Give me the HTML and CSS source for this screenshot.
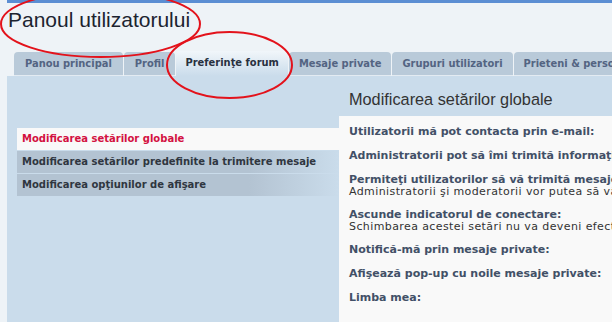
FILE: index.html
```html
<!DOCTYPE html>
<html lang="ro">
<head>
<meta charset="utf-8">
<title>Panoul utilizatorului</title>
<link rel="stylesheet" href="styles.css">
</head>
<body>
<div class="page">
  <div class="topbar"></div>
  <h1 class="title">Panoul utilizatorului</h1>
  <ul class="tabs">
    <li class="tab">Panou principal</li>
    <li class="tab">Profil</li>
    <li class="tab active">Preferinţe forum</li>
    <li class="tab">Mesaje private</li>
    <li class="tab">Grupuri utilizatori</li>
    <li class="tab">Prieteni &amp; persoane ignorate</li>
  </ul>
  <div class="panel">
    <ul class="nav">
      <li class="nav-item current">Modificarea setărilor globale</li>
      <li class="nav-item">Modificarea setărilor predefinite la trimitere mesaje</li>
      <li class="nav-item">Modificarea opţiunilor de afişare</li>
    </ul>
    <div class="main">
      <h2 class="heading">Modificarea setărilor globale</h2>
      <div class="box">
        <dl class="row"><dt>Utilizatorii mă pot contacta prin e-mail:</dt></dl>
        <dl class="row"><dt>Administratorii pot să îmi trimită informaţii prin e-mail:</dt></dl>
        <dl class="row"><dt>Permiteţi utilizatorilor să vă trimită mesaje private:</dt><dd>Administratorii şi moderatorii vor putea să vă trimită mesaje.</dd></dl>
        <dl class="row"><dt>Ascunde indicatorul de conectare:</dt><dd>Schimbarea acestei setări nu va deveni efectivă până la următoarea vizită.</dd></dl>
        <dl class="row"><dt>Notifică-mă prin mesaje private:</dt></dl>
        <dl class="row"><dt>Afişează pop-up cu noile mesaje private:</dt></dl>
        <dl class="row"><dt>Limba mea:</dt></dl>
      </div>
    </div>
  </div>
</div>
<svg class="marks" width="612" height="322" viewBox="0 0 612 322" aria-hidden="true">
  <ellipse cx="100.5" cy="24" rx="99.5" ry="33" fill="none" stroke="#e3121b" stroke-width="2"/>
  <ellipse cx="229.5" cy="65" rx="62.5" ry="33" fill="none" stroke="#e3121b" stroke-width="2"/>
</svg>
</body>
</html>
```
FILE: styles.css
```css
html, body {
  margin: 0;
  padding: 0;
  width: 612px;
  height: 322px;
  overflow: hidden;
  background: #eef3f7;
}
body {
  position: relative;
  font-family: "DejaVu Sans", Verdana, sans-serif;
}
.page {
  margin-left: 7px;
  height: 322px;
  display: flex;
  flex-direction: column;
  white-space: nowrap;
}
.topbar {
  height: 3px;
  background: #5b8ed3;
}
.title {
  margin: 5px 0 0 1px;
  font-family: "Liberation Sans", Arial, sans-serif;
  font-weight: normal;
  font-size: 21px;
  line-height: 24px;
  color: #1c2430;
}
.tabs {
  list-style: none;
  margin: 19px 0 0 7px;
  padding: 0;
  height: 25px;
  display: flex;
  align-items: flex-end;
  gap: 1px;
}
.tab {
  flex: none;
  height: 23px;
  line-height: 23px;
  padding: 0 10px;
  background: #b9cad9;
  border-bottom: 1px solid #e3ebf2;
  border-radius: 4px 4px 0 0;
  font-family: "DejaVu Sans Condensed", "DejaVu Sans", sans-serif;
  font-stretch: condensed;
  font-weight: bold;
  font-size: 11px;
  color: #536482;
}
.tab:first-child {
  padding: 0 11px;
}
.tab:nth-child(2) {
  padding: 0 11px;
}
.tab.active {
  height: 25px;
  line-height: 24px;
  border-bottom: 0;
  padding: 0 9px;
  background: linear-gradient(#f1f6fa, #cadceb);
  color: #28313f;
}
.panel {
  flex: 1;
  display: flex;
  background: #cadceb;
  padding-left: 10px;
  min-height: 0;
}
.nav {
  list-style: none;
  margin: 0;
  padding: 52px 0 0;
  width: 322px;
  flex: none;
}
.nav-item {
  height: 22px;
  line-height: 22px;
  margin-bottom: 1px;
  padding-left: 5px;
  font-weight: bold;
  font-size: 10px;
  color: #2f3640;
  background: linear-gradient(to right, #b3c3d2 72%, #cadceb);
}
.nav-item.current {
  background: #f9f9f9;
  color: #d31141;
}
.main {
  flex: 1;
  min-width: 0;
  display: flex;
  flex-direction: column;
}
.heading {
  margin: 13px 0 7px 10px;
  font-family: "Liberation Sans", Arial, sans-serif;
  font-weight: normal;
  font-size: 16.3px;
  line-height: 20px;
  color: #333;
}
.box {
  flex: 1;
  background: #f9f9f9;
  padding: 9px 0 0 10px;
}
.row {
  margin: 0 0 11px;
}
.row dt {
  font-weight: bold;
  font-size: 11px;
  line-height: 13px;
  color: #425067;
}
.row dd {
  margin: 0;
  font-size: 11px;
  letter-spacing: 0.4px;
  line-height: 11px;
  color: #333;
}
.marks {
  position: absolute;
  left: 0;
  top: 0;
  pointer-events: none;
}
```
